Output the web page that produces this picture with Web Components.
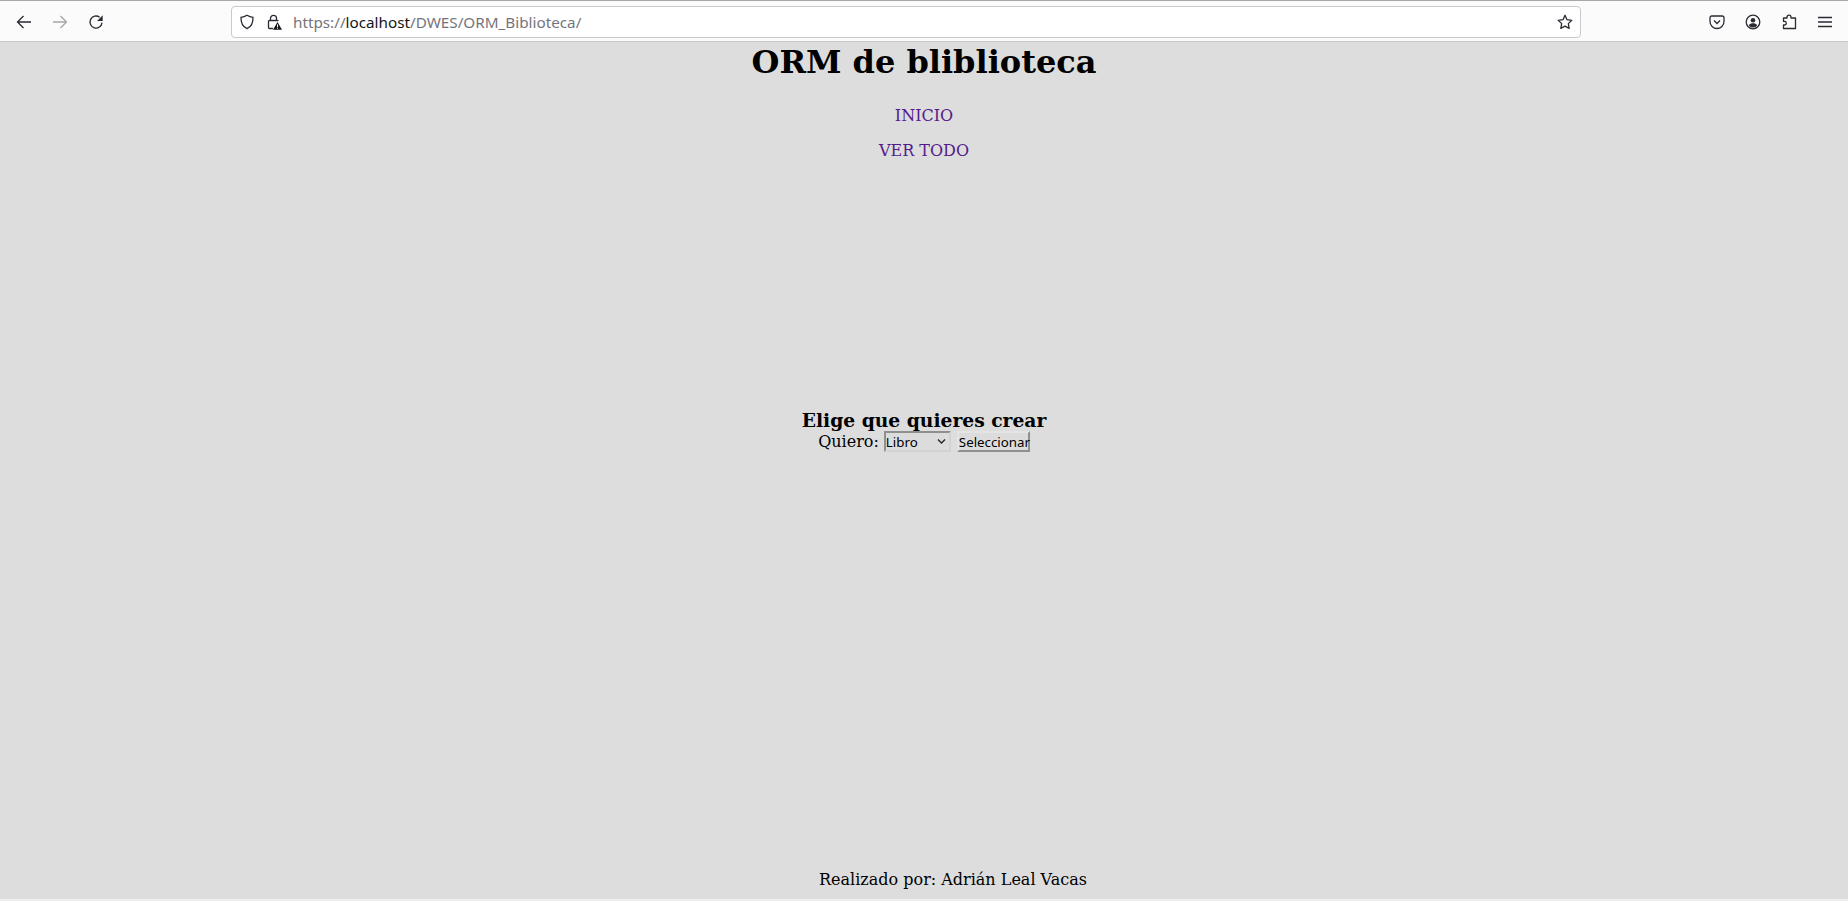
<!DOCTYPE html>
<html lang="es">
<head>
<meta charset="utf-8">
<title>ORM de bliblioteca</title>
<style>
html, body { margin: 0; height: 100%; overflow: hidden; }
body { display: flex; flex-direction: column; height: 901px; background: #ddd; }
</style>
</head>
<body>
<browser-bar url-host="localhost" url-path="/DWES/ORM_Biblioteca/"></browser-bar>
<orm-page>
  <orm-nav slot="nav">
    <a href="#inicio">INICIO</a>
    <a href="#todo">VER TODO</a>
  </orm-nav>
  <crear-form></crear-form>
</orm-page>

<script>
const barTemplate = document.createElement('template');
barTemplate.innerHTML = `
<style>
:host {
    display: flex;
    align-items: center;
    flex: none;
    box-sizing: border-box;
    height: 42px;
    padding-top: 1px;
    background: #fbfbfb;
    border-top: 1px solid #a8a8a8;
    border-bottom: 1px solid #c8c8c8;
    font-family: "Noto Sans", sans-serif;
}
svg { display: block; fill: none; stroke: #2b2a33; stroke-width: 1.3; }
.btn { width: 16px; height: 16px; flex: none; }
#back { margin-left: 16px; }
#fwd { margin-left: 20px; opacity: .4; }
#reload { margin-left: 20px; }
#urlbar {
    display: flex;
    align-items: center;
    box-sizing: border-box;
    width: 1350px;
    height: 32px;
    margin-left: 127px;
    background: #fff;
    border: 1px solid #c9c9ce;
    border-radius: 4px;
}
#shield { margin-left: 7px; }
#lock { margin-left: 11px; }
#url { margin-left: 11px; font-size: 15.25px; color: #75747c; white-space: nowrap; }
#url b { font-weight: 400; color: #15141a; }
#star { margin-left: auto; margin-right: 7px; }
#tools { display: flex; align-items: center; gap: 20px; margin-left: 128px; }
</style>
<svg id="back" class="btn" viewBox="0 0 16 16"><path d="M15 8H1.500M7.500 2 1.500 8l6 6"/></svg>
<svg id="fwd" class="btn" viewBox="0 0 16 16"><path d="M1 8h13.500M8.500 2l6 6-6 6"/></svg>
<svg id="reload" class="btn" viewBox="0 0 16 16"><path d="M14 8.600A6 6 0 1 1 11.600 3.200"/><path d="M14.700 1.300v5.600H9.100z" fill="#2b2a33" stroke="none"/></svg>
<div id="urlbar">
  <svg id="shield" class="btn" viewBox="0 0 16 16"><path d="M8 1.300c2 1.200 3.800 1.800 6 2 .2 5.500-1.700 9.500-6 11.400C3.700 12.800 1.800 8.800 2 3.300c2.200-.2 4-.8 6-2z"/></svg>
  <svg id="lock" class="btn" viewBox="0 0 16 16"><path d="M4.500 6.500V4.300a3 3 0 0 1 6 0v2.200M7 14.500H3.500a1 1 0 0 1-1-1V7.500a1 1 0 0 1 1-1h8a1 1 0 0 1 .8.400"/><path d="M11.500 8 16 15.700H7z" fill="#15141a" stroke="none"/><path d="M11.500 10.400v2.700M11.500 13.700v1" stroke="#fff" stroke-width="1"/></svg>
  <span id="url"></span>
  <svg id="star" class="btn" viewBox="0 0 16 16"><path d="M8 1.300l2 4.400 4.800.6-3.500 3.300.9 4.800L8 12.100l-4.200 2.300.9-4.800L1.200 6.300 6 5.700z" stroke-linejoin="round"/></svg>
</div>
<div id="tools">
  <svg class="btn" viewBox="0 0 16 16"><path d="M2.700 2h10.600A1.700 1.700 0 0 1 15 3.700V7.500a7 7 0 0 1-14 0V3.700A1.700 1.700 0 0 1 2.700 2z"/><path d="M5 6.500l3 3 3-3"/></svg>
  <svg class="btn" viewBox="0 0 16 16"><circle cx="8" cy="8" r="6.800"/><circle cx="8" cy="6.300" r="2.300" fill="#2b2a33" stroke="none"/><path d="M3.800 11.200c1-1.500 2.500-2 4.200-2s3.200.5 4.200 2C11.200 12.700 9.700 13.400 8 13.400s-3.200-.7-4.200-2.200z" fill="#2b2a33" stroke="none"/></svg>
  <svg class="btn" viewBox="0 0 16 16"><path d="M6 4V3.200a2 2 0 0 1 4 0V4h4.500v10.500H2.500v-3.500h1a1.800 1.800 0 0 0 0-3.600h-1V4z" stroke-linejoin="round"/></svg>
  <svg class="btn" viewBox="0 0 16 16"><path d="M1 3.500h14M1 8h14M1 12.500h14"/></svg>
</div>
`;

class BrowserBar extends HTMLElement {
    constructor() {
        super();
        const shadowRoot = this.attachShadow({mode: 'open'});
        shadowRoot.appendChild(barTemplate.content.cloneNode(true));
    }

    connectedCallback() {
        const url = this.shadowRoot.querySelector('#url');
        url.innerHTML = `https://<b>${this.getAttribute('url-host')}</b>${this.getAttribute('url-path')}`;
    }
}
customElements.define('browser-bar', BrowserBar);

const pageTemplate = document.createElement('template');
pageTemplate.innerHTML = `
<style>
:host {
    display: flex;
    flex-direction: column;
    flex: 1;
    min-height: 0;
    font-family: "DejaVu Serif", serif;
    font-size: 16px;
    color: #000;
    text-align: center;
}
h1 { margin: 0; padding-top: 2px; font-size: 32px; line-height: 37px; font-weight: 700; }
main { flex: 1; padding-top: 249px; }
footer { flex: none; height: 29px; padding-left: 58px; line-height: 19px; border-bottom: 2px solid #eee; }
</style>
<h1>ORM de bliblioteca</h1>
<slot name="nav"></slot>
<main><slot></slot></main>
<footer>Realizado por: Adrián Leal Vacas</footer>
`;

class OrmPage extends HTMLElement {
    constructor() {
        super();
        this.attachShadow({mode: 'open'}).appendChild(pageTemplate.content.cloneNode(true));
    }
}
customElements.define('orm-page', OrmPage);

const navTemplate = document.createElement('template');
navTemplate.innerHTML = `
<style>
:host { display: flex; flex-direction: column; gap: 16px; padding-top: 25px; }
::slotted(a) { color: #551a8b; text-decoration: none; line-height: 19px; }
</style>
<slot></slot>
`;

class OrmNav extends HTMLElement {
    constructor() {
        super();
        this.attachShadow({mode: 'open'}).appendChild(navTemplate.content.cloneNode(true));
    }
}
customElements.define('orm-nav', OrmNav);

const formTemplate = document.createElement('template');
formTemplate.innerHTML = `
<style>
:host { display: block; }
h3 { margin: 0; font-size: 18.72px; line-height: 23px; font-weight: 700; }
form { display: flex; justify-content: center; align-items: center; height: 19px; line-height: 19px; }
#pick { position: relative; display: block; width: 67px; height: 21px; margin-left: 5px; }
#pick svg { position: absolute; right: 5px; top: 7px; width: 9px; height: 7px; fill: none; stroke: #222; stroke-width: 1.300; pointer-events: none; }
select, button { font-family: "Noto Sans", sans-serif; font-size: 13.300px; color: #000; margin: 0; box-sizing: border-box; height: 21px; background: #dcdcdc; border-radius: 0; outline: 0; }
select {
    display: block;
    appearance: none;
    width: 100%;
    padding: 0;
    border: 2px solid;
    border-color: #8f8f8f #d2d2d2 #d2d2d2 #8f8f8f;
}
button {
    width: 73px;
    margin-left: 6px;
    padding: 0;
    border: 2px solid;
    border-color: #e4e4e4 #8f8f8f #8f8f8f #e4e4e4;
    white-space: nowrap;
}
</style>
<h3>Elige que quieres crear</h3>
<form onsubmit="return false">
  <label for="tipo">Quiero:</label>
  <span id="pick">
    <select id="tipo"><option>Libro</option><option>Autor</option></select>
    <svg viewBox="0 0 9 7"><path d="M1 1.500l3.500 3.500L8 1.500"/></svg>
  </span>
  <button type="submit">Seleccionar</button>
</form>
`;

class CrearForm extends HTMLElement {
    constructor() {
        super();
        this.attachShadow({mode: 'open'}).appendChild(formTemplate.content.cloneNode(true));
    }
}
customElements.define('crear-form', CrearForm);
</script>
</body>
</html>
